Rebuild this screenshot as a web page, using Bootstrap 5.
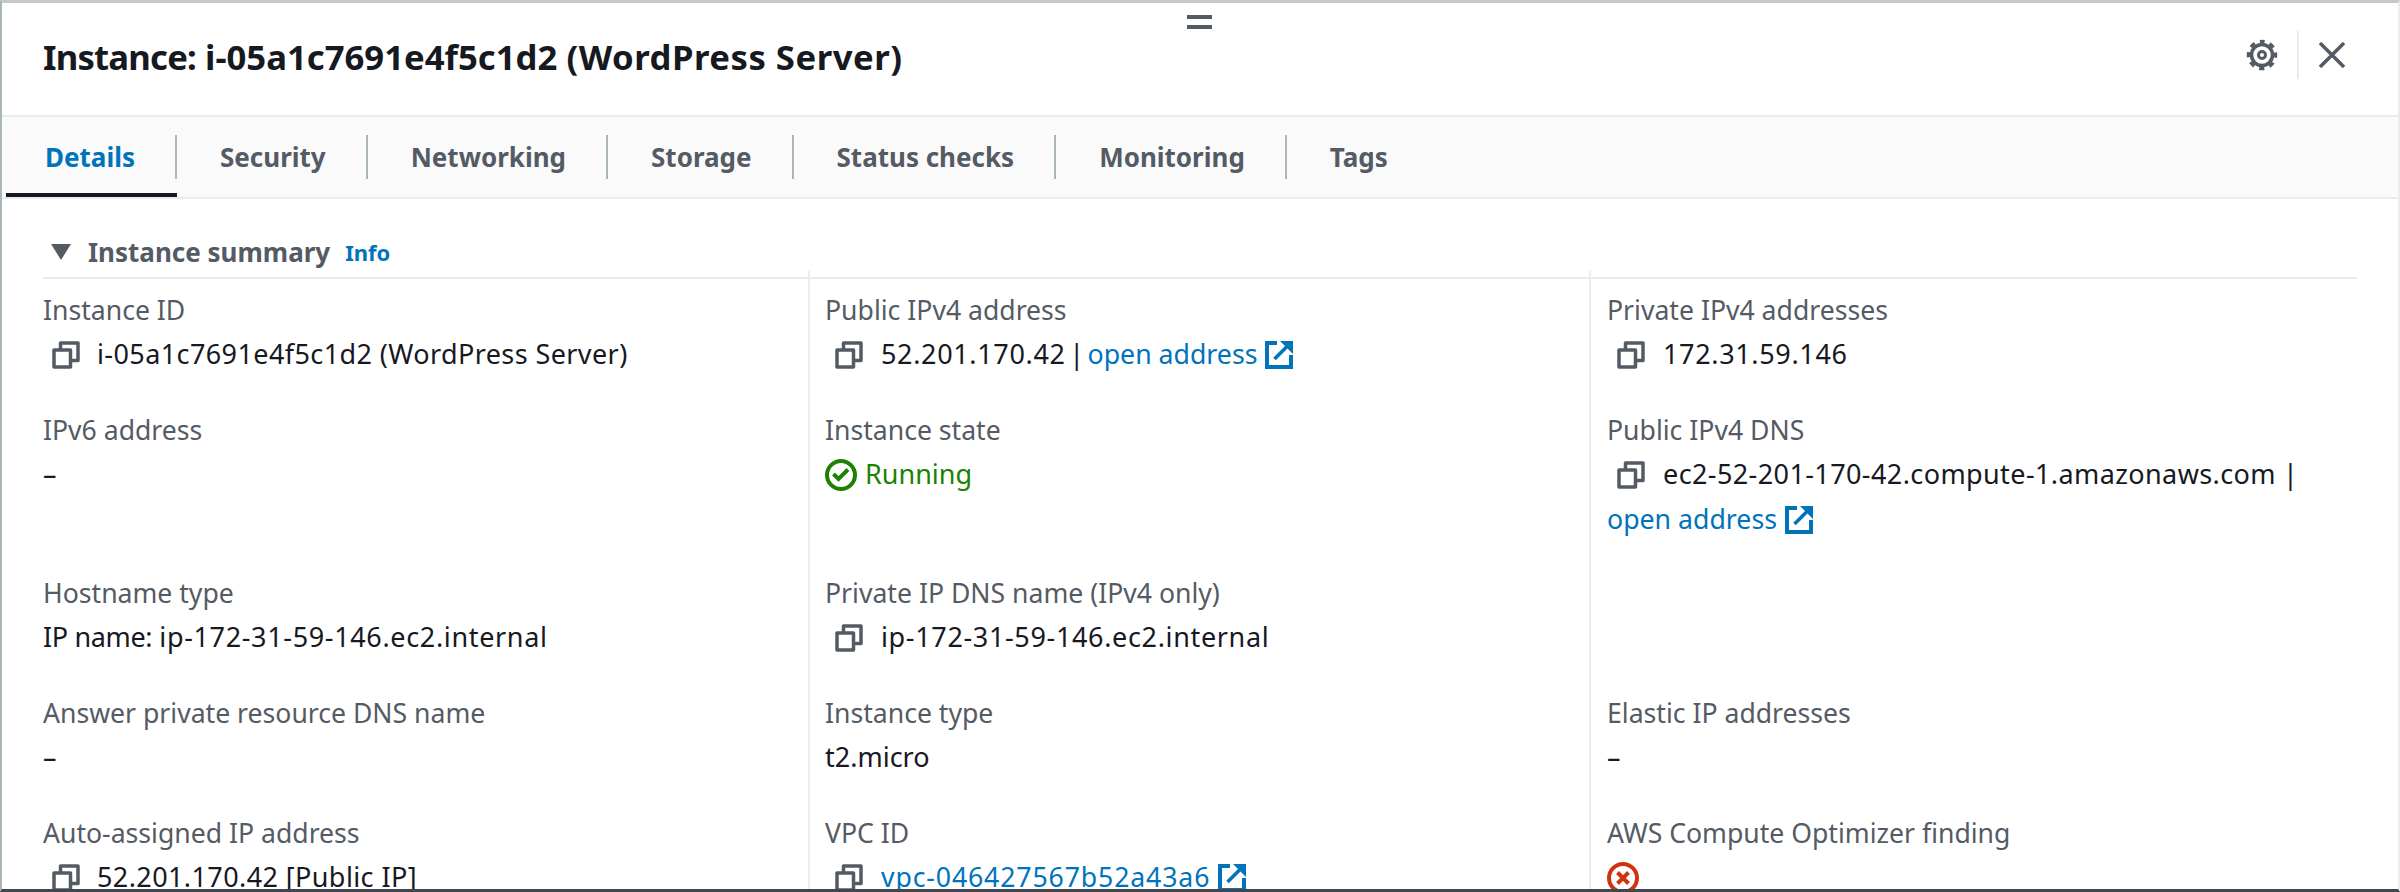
<!DOCTYPE html>
<html lang="en">
<head>
  <meta charset="UTF-8" />
  <title>Instance details</title>
  <link rel="stylesheet" href="https://cdn.jsdelivr.net/npm/bootstrap@5.3.0/dist/css/bootstrap.min.css"/>
  <style>
    html, body { height: 100%; overflow: hidden; }
    body { font-family: "Noto Sans", sans-serif; font-size: 27px; color: #16191f; background: #fff; }
    .panel-wrap { height: 892px; overflow: hidden; position: relative; border-top: 3px solid #c4c9cc; border-left: 2px solid #aab7b8; border-right: 2px solid #eaeded; border-bottom: 3px solid #414750; }
    .drag-handle { position: absolute; left: 1185px; top: 12px; width: 25px; height: 14px; border-top: 4px solid #545b64; border-bottom: 4px solid #545b64; }
    .panel-head { height: 114px; padding: 0 53px 4px 41px; border-bottom: 2px solid #eaeded; }
    .panel-head h1 { font-size: 34.7px; font-weight: 700; margin: 0; color: #16191f; }
    .head-key { letter-spacing: -.8px; }
    .head-name { letter-spacing: .5px; }
    .head-tools { margin-bottom: 4px; }
    .head-sep { width: 2px; height: 48px; background: #e9ebed; margin: 0 20px 0 19px; }
    .tab-strip { height: 82px; background: #fafafa; border-bottom: 2px solid #eaeded; padding-left: 4px; }
    .tab-strip .nav-link { height: 80px; padding: 0; display: flex; align-items: center; font-size: 26px; font-weight: 700; color: #545b64; }
    .tab-strip .nav-item { position: relative; padding: 0 42px 0 43px; }
    .tab-strip .nav-item:first-child { padding-left: 39px; }
    .tab-strip .nav-item:not(:last-child)::after { content: ""; position: absolute; right: 0; top: 18px; height: 44px; width: 2px; background: #aab7b8; }
    .tab-strip .nav-item.on::before { content: ""; position: absolute; left: 0; right: 0; bottom: 0; height: 4px; background: #16191f; }
    .tab-strip .nav-item.on .nav-link { color: #0073bb; }
    .summary { padding: 0 41px; }
    .summary-head { height: 80px; border-bottom: 2px solid #eaeded; font-size: 26px; font-weight: 700; color: #545b64; padding-top: 28px; }
    .summary-head .caret { width: 0; height: 0; border-left: 10px solid transparent; border-right: 10px solid transparent; border-top: 16px solid #545b64; margin: 0 17px 0 8px; }
    .info-link { font-size: 22px; color: #0073bb; text-decoration: none; font-weight: 700; margin-left: 15px; }
    .fact-row { display: flex; }
    .fact { flex: none; width: 781px; min-height: 120px; padding: 10px 0 21px 15px; border-left: 2px solid #eaeded; position: relative; }
    .fact:first-child { width: 765px; padding-left: 0; border-left: 0; }
    .fact:last-child { flex: 1 1 0; width: auto; padding-left: 16px; }
    .fact-row.first .fact:not(:first-child)::before { content: ""; position: absolute; left: -2px; top: -8px; width: 2px; height: 8px; background: #eaeded; }
    .fact-label { color: #545b64; font-size: 26.6px; height: 42px; line-height: 42px; }
    .fact-value { line-height: 45px; }
    .fact-value a { color: #0073bb; font-size: 26.7px; text-decoration: none; white-space: nowrap; word-spacing: 0; }
    .tight-pipe { word-spacing: -3.5px; }
    .ls-n { letter-spacing: -.35px; }
    .ls-a { letter-spacing: .4px; }
    .ls-b { letter-spacing: .65px; }
    .ls-c { letter-spacing: .85px; }
    .ico-copy { width: 28px; height: 28px; margin: 0 18px 0 10px; vertical-align: -5px; }
    .fact:first-child .ico-copy { margin: 0 17px 0 9px; }
    .ico-ext { width: 28px; height: 28px; margin-left: 8px; vertical-align: -5px; }
    .state-ok { color: #1d8102; }
    .ico-state { width: 32px; height: 32px; vertical-align: -7px; margin-right: 8px; }
  </style>
</head>
<body>
<svg width="0" height="0" class="d-block">
  <defs>
    <symbol id="copy" viewBox="0 0 28 28"><path d="M2 9h16.500v17h-16.500z M8.500 8v-6h17.500v17.500h-6" fill="none" stroke="#545b64" stroke-width="3.500" stroke-linejoin="round"/></symbol>
    <symbol id="ext" viewBox="0 0 28 28"><path d="M12 2H2v24h24V14" fill="none" stroke="#0073bb" stroke-width="4"/><path d="M9.500 18L22 5.500" fill="none" stroke="#0073bb" stroke-width="3.500"/><path d="M15 0h13v13z" fill="#0073bb"/></symbol>
  </defs>
</svg>

<div class="panel-wrap">
  <div class="drag-handle"></div>

  <div class="panel-head d-flex align-items-center justify-content-between">
    <h1><span class="head-key">Instance:</span> i-05a1c7691e4f5c1d2 <span class="head-name">(WordPress Server)</span></h1>
    <div class="head-tools d-flex align-items-center">
      <svg width="32" height="32" viewBox="0 0 32 32" fill="none" stroke="#545b64">
        <circle cx="16" cy="16" r="10.500" stroke-width="3.500"/>
        <circle cx="16" cy="16" r="13.500" stroke-width="3.500" stroke-dasharray="5.300 5.300" stroke-dashoffset="2.650" transform="rotate(-90 16 16)"/>
        <circle cx="16" cy="16" r="3.500" stroke-width="3"/>
      </svg>
      <div class="head-sep"></div>
      <svg width="26" height="26" viewBox="0 0 26 26" fill="none" stroke="#545b64" stroke-width="3.500"><path d="M1 1L25 25M25 1L1 25"/></svg>
    </div>
  </div>

  <ul class="nav tab-strip">
    <li class="nav-item on"><a class="nav-link" href="#">Details</a></li>
    <li class="nav-item"><a class="nav-link" href="#">Security</a></li>
    <li class="nav-item"><a class="nav-link" href="#">Networking</a></li>
    <li class="nav-item"><a class="nav-link" href="#">Storage</a></li>
    <li class="nav-item"><a class="nav-link" href="#">Status checks</a></li>
    <li class="nav-item"><a class="nav-link" href="#">Monitoring</a></li>
    <li class="nav-item"><a class="nav-link" href="#">Tags</a></li>
  </ul>

  <div class="summary">
    <div class="summary-head d-flex align-items-center">
      <span class="caret"></span>Instance summary<a class="info-link" href="#">Info</a>
    </div>

    <div class="fact-row first">
      <div class="fact">
        <div class="fact-label">Instance ID</div>
        <div class="fact-value ls-a"><svg class="ico-copy"><use href="#copy"/></svg>i-05a1c7691e4f5c1d2 (WordPress Server)</div>
      </div>
      <div class="fact">
        <div class="fact-label">Public IPv4 address</div>
        <div class="fact-value tight-pipe"><svg class="ico-copy"><use href="#copy"/></svg><span class="ls-b">52.201.170.42</span> | <a href="#">open address<svg class="ico-ext"><use href="#ext"/></svg></a></div>
      </div>
      <div class="fact">
        <div class="fact-label">Private IPv4 addresses</div>
        <div class="fact-value ls-b"><svg class="ico-copy"><use href="#copy"/></svg>172.31.59.146</div>
      </div>
    </div>

    <div class="fact-row">
      <div class="fact">
        <div class="fact-label">IPv6 address</div>
        <div class="fact-value">–</div>
      </div>
      <div class="fact">
        <div class="fact-label">Instance state</div>
        <div class="fact-value state-ok">
          <svg class="ico-state" viewBox="0 0 32 32" fill="none" stroke="#1d8102"><circle cx="16" cy="16" r="14" stroke-width="4"/><path d="M8.500 15l5 5 9.500-9.500" stroke-width="4"/></svg>Running
        </div>
      </div>
      <div class="fact">
        <div class="fact-label">Public IPv4 DNS</div>
        <div class="fact-value"><svg class="ico-copy"><use href="#copy"/></svg><span class="ls-a">ec2-52-201-170-42.compute-1.amazonaws.com</span> | <a href="#">open address<svg class="ico-ext"><use href="#ext"/></svg></a></div>
      </div>
    </div>

    <div class="fact-row">
      <div class="fact">
        <div class="fact-label">Hostname type</div>
        <div class="fact-value"><span class="ls-n">IP name:</span> <span class="ls-b">ip-172-31-59-146.ec2.internal</span></div>
      </div>
      <div class="fact">
        <div class="fact-label">Private IP DNS name (IPv4 only)</div>
        <div class="fact-value ls-b"><svg class="ico-copy"><use href="#copy"/></svg>ip-172-31-59-146.ec2.internal</div>
      </div>
      <div class="fact"></div>
    </div>

    <div class="fact-row">
      <div class="fact">
        <div class="fact-label">Answer private resource DNS name</div>
        <div class="fact-value">–</div>
      </div>
      <div class="fact">
        <div class="fact-label">Instance type</div>
        <div class="fact-value">t2.micro</div>
      </div>
      <div class="fact">
        <div class="fact-label">Elastic IP addresses</div>
        <div class="fact-value">–</div>
      </div>
    </div>

    <div class="fact-row">
      <div class="fact">
        <div class="fact-label">Auto-assigned IP address</div>
        <div class="fact-value ls-a"><svg class="ico-copy"><use href="#copy"/></svg>52.201.170.42 [Public IP]</div>
      </div>
      <div class="fact">
        <div class="fact-label">VPC ID</div>
        <div class="fact-value"><svg class="ico-copy"><use href="#copy"/></svg><a class="ls-c" href="#">vpc-046427567b52a43a6<svg class="ico-ext"><use href="#ext"/></svg></a></div>
      </div>
      <div class="fact">
        <div class="fact-label">AWS Compute Optimizer finding</div>
        <div class="fact-value"><svg class="ico-state" viewBox="0 0 32 32" fill="none" stroke="#d13212"><circle cx="16" cy="16" r="14" stroke-width="4"/><path d="M10.500 10.500l11 11M21.500 10.500l-11 11" stroke-width="4"/></svg></div>
      </div>
    </div>
  </div>
</div>

<script src="https://cdn.jsdelivr.net/npm/bootstrap@5.3.0/dist/js/bootstrap.bundle.min.js"></script>
</body>
</html>
